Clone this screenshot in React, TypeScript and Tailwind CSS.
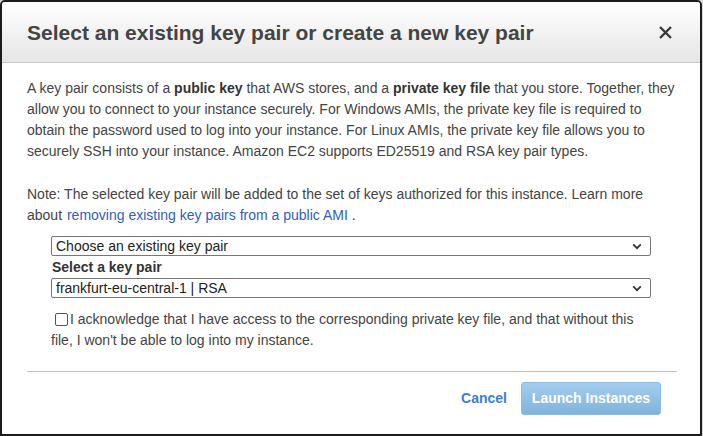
import React from 'react';

const Chevron = () => (
  <svg width="10" height="7" viewBox="0 0 10 7" className="shrink-0">
    <path d="M1.2 1.4 L5 5.2 L8.8 1.4" fill="none" stroke="#333" strokeWidth="1.8" />
  </svg>
);

const FakeSelect = ({ value }: { value: string }) => (
  <div className="flex h-[20px] w-[600px] items-center justify-between rounded-[2px] border border-[#767676] bg-white pl-[4px] pr-[8px] text-[14px] leading-none text-[#222]">
    <span>{value}</span>
    <Chevron />
  </div>
);

const App = () => {
  return (
    <div className="h-[436px] w-[703px] bg-[#d8d8d8] font-['Liberation_Sans',Arial,sans-serif]">
      <div className="flex h-[436px] w-[702px] flex-col overflow-hidden rounded-t-[5px] border-2 border-[#1c1c1c] bg-white">
        {/* Header */}
        <div className="flex h-[61px] shrink-0 items-center justify-between border-b border-[#c9c9c9] bg-gradient-to-b from-white to-[#e6e6e6] pl-[25px] pr-[27px]">
          <h1 className="pt-[2px] text-[21px] font-bold text-[#444]">
            Select an existing key pair or create a new key pair
          </h1>
          <svg width="15" height="15" viewBox="0 0 15 15">
            <path d="M2 2 L13 13 M13 2 L2 13" stroke="#3a3a3a" strokeWidth="2.4" />
          </svg>
        </div>

        {/* Body */}
        <div className="px-[25px] pt-[15px] text-[14px] leading-[21px] text-[#444]">
          <p className="mb-[22px]">
            A key pair consists of a <b className="text-[#333]">public key</b> that AWS stores, and a{' '}
            <b className="text-[#333]">private key file</b> that you store. Together, they allow you to connect
            to your instance securely. For Windows AMIs, the private key file is required to obtain the password
            used to log into your instance. For Linux AMIs, the private key file allows you to securely SSH into
            your instance. Amazon EC2 supports ED25519 and RSA key pair types.
          </p>
          <p>
            Note: The selected key pair will be added to the set of keys authorized for this instance. Learn more
            about <span className="ml-[1px] text-[#2f5fbf]">removing existing key pairs from a public AMI</span> .
          </p>

          <div className="mt-[10px] pl-[24px]">
            <FakeSelect value="Choose an existing key pair" />
            <div className="h-[22px] pl-[1px] pt-[1px] font-bold leading-[21px] text-[#333]">Select a key pair</div>
            <FakeSelect value="frankfurt-eu-central-1 | RSA" />

            <div className="mt-[11px] pr-[20px] leading-[21px]">
              <span className="mr-[2px] ml-[4px] inline-block h-[13px] w-[13px] translate-y-[1px] rounded-[2px] border border-[#555] bg-white align-[-1px]" />
              I acknowledge that I have access to the corresponding private key file, and that without this file, I
              won't be able to log into my instance.
            </div>
          </div>

          <div className="mt-[20px] h-px w-[650px] bg-[#c2c2c2]" />
        </div>

        {/* Footer */}
        <div className="flex items-center justify-end gap-[14px] pr-[39px] pt-[10px]">
          <span className="text-[14px] font-bold text-[#3b7ddb]">Cancel</span>
          <div className="flex h-[33px] w-[140px] items-center justify-center rounded-[3px] border border-[#8dbde4] bg-gradient-to-b from-[#a3cdee] to-[#80b3dc] text-[14px] font-bold text-white">
            Launch Instances
          </div>
        </div>
      </div>
    </div>
  );
};

export default App;
